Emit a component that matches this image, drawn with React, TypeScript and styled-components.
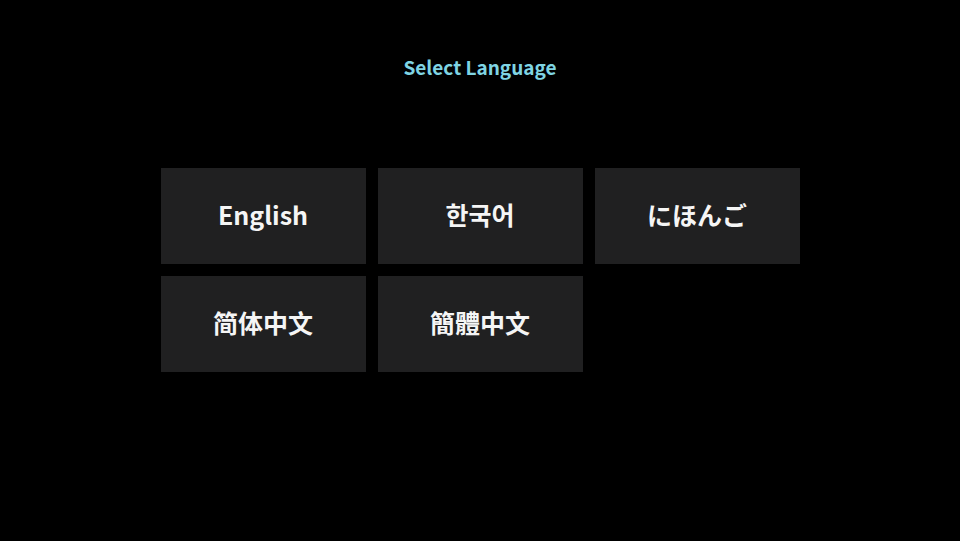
import React from "react";
import styled, { createGlobalStyle } from "styled-components";

const Global = createGlobalStyle`
  html, body { margin: 0; padding: 0; background: #000; }
  body { font-family: "Noto Sans CJK KR", "Noto Sans", sans-serif; }
`;

const Page = styled.div`
  width: 960px;
  height: 541px;
  background: #000;
  display: flex;
  flex-direction: column;
  align-items: center;
`;

const Title = styled.h1`
  margin: 53px 0 0;
  font-size: 19px;
  line-height: 28px;
  font-weight: 700;
  color: #7fd4e3;
  font-family: "Noto Sans CJK KR", "Noto Sans", sans-serif;
`;

const Grid = styled.div`
  margin-top: 87px;
  display: grid;
  grid-template-columns: repeat(3, 205px);
  grid-auto-rows: 96px;
  gap: 12px;
`;

const LangButton = styled.button<{ $font: string }>`
  border: none;
  margin: 0;
  padding: 0 0 5px;
  background: #202021;
  color: #f5f5f5;
  font-size: 25px;
  font-weight: 700;
  font-family: ${(p) => p.$font}, "Noto Sans", sans-serif;
  display: flex;
  align-items: center;
  justify-content: center;
  cursor: pointer;
`;

const langs = [
  { label: "English", font: '"Noto Sans CJK KR"' },
  { label: "한국어", font: '"Noto Sans CJK KR"' },
  { label: "にほんご", font: '"Noto Sans CJK JP"' },
  { label: "简体中文", font: '"Noto Sans CJK SC"' },
  { label: "簡體中文", font: '"Noto Sans CJK TC"' },
];

export default function App() {
  return (
    <>
      <Global />
      <Page>
        <Title>Select Language</Title>
        <Grid>
          {langs.map((l) => (
            <LangButton key={l.label} $font={l.font}>
              {l.label}
            </LangButton>
          ))}
        </Grid>
      </Page>
    </>
  );
}
